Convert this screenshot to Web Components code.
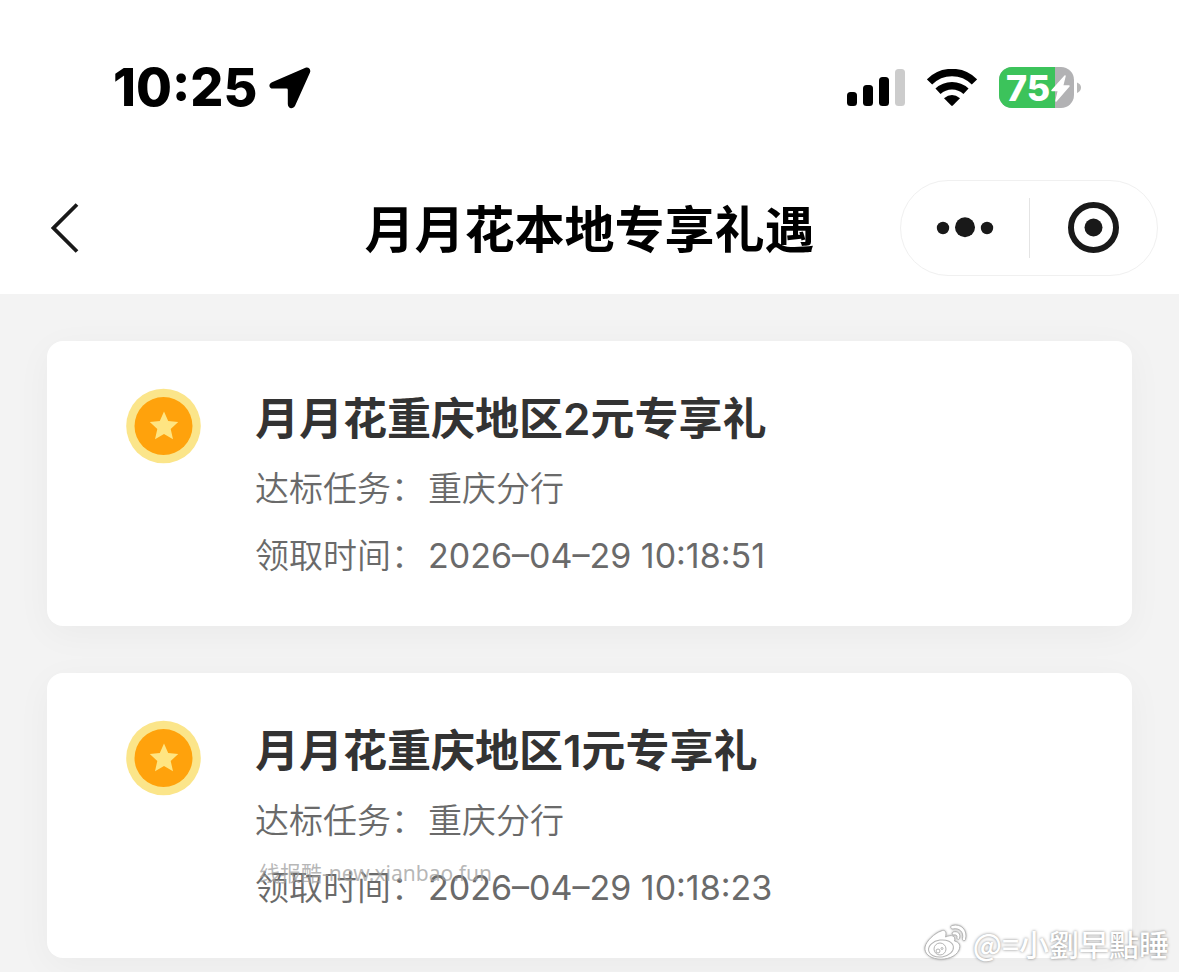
<!DOCTYPE html>
<html lang="zh-CN">
<head>
<meta charset="utf-8">
<meta name="viewport" content="width=device-width, initial-scale=1">
<title>月月花本地专享礼遇</title>
<style>
body { margin: 0; background: #f3f3f3; font-family: Inter, "Noto Sans CJK SC", sans-serif; color: #333; }
</style>
</head>
<body>
<gift-page></gift-page>
<script>
const define = (name, html) => customElements.define(name, class extends HTMLElement {
  connectedCallback() {
    if (this.shadowRoot) return;
    const t = document.createElement('template');
    t.innerHTML = html;
    this.attachShadow({ mode: 'open' }).append(t.content.cloneNode(true));
  }
});

define('status-bar', `
<style>
:host { display: flex; align-items: center; justify-content: space-between; height: 176px; padding: 0 97px 0 113px; color: #000; }
div { display: flex; align-items: center; }
.time { gap: 12px; font-size: 52px; font-weight: 800; line-height: 60px; }
.state { gap: 22px; }
.battery { position: relative; display: flex; align-items: center; width: 83px; height: 42px; }
.level { position: absolute; left: 7px; font-size: 36px; font-weight: 800; line-height: 42px; color: #fff; }
svg { display: block; }
</style>
<div class="time"><span>10:25</span>
<svg width="42" height="42" viewBox="0 0 42 42"><path d="M36.5.8 3 15.2C-.8 17-.4 21.600 4 21.600H17.500Q18.800 21.600 18.800 23V37C18.800 42 24.200 42.500 26.200 38.500L41 5.500C42.200 2.300 39.500-.4 36.500.8Z"/></svg></div>
<div class="state">
<svg width="58" height="38" viewBox="0 0 58 38"><rect y="23" width="10" height="14" rx="3.500"/><rect x="16" y="16" width="10" height="21" rx="3.500"/><rect x="32" y="8" width="10" height="29" rx="3.500"/><rect x="48" width="10" height="37" rx="3.500" fill="#ccc"/></svg>
<svg width="50" height="38" viewBox="0 0 50 38"><path d="M2.500 13A31.500 31.500 0 0 1 47.500 13" fill="none" stroke="#000" stroke-width="7.500"/><path d="M11 22.300A20.500 20.500 0 0 1 39 22.300" fill="none" stroke="#000" stroke-width="7.500"/><path d="M17 29.300Q25 22.500 33 29.300L25.800 36.600Q25 37.400 24.200 36.600Z"/></svg>
<div class="battery"><svg width="83" height="42" viewBox="0 0 83 42"><defs><clipPath id="c"><rect width="75" height="41" rx="13"/></clipPath></defs><g clip-path="url(#c)"><rect width="75" height="41" fill="#b2b2b4"/><rect width="56" height="41" fill="#3cc35b"/></g><path d="M78 15.500Q82 17 82 20.500T78 26Z" fill="#b8b8b8"/><path d="M66 9 53 23.500H59.500L57 34 70 19H63.500Z" fill="#fff" stroke="#fff" stroke-width="1.500" stroke-linejoin="round"/></svg><span class="level">75</span></div>
</div>`);

define('nav-bar', `
<style>
:host { display: grid; grid-template-columns: 1fr auto 1fr; align-items: center; height: 104px; padding: 0 21px; color: #000; }
h1 { margin: 0; padding-top: 4px; font-size: 50px; line-height: 72px; font-weight: 700; white-space: nowrap; }
button { border: 0; background: none; padding: 0; display: flex; align-items: center; justify-content: center; }
svg { display: block; }
.back { width: 40px; height: 60px; margin-left: 24px; }
.capsule { justify-self: end; display: flex; align-items: center; box-sizing: border-box; width: 258px; height: 96px; border: 1px solid #f0f0f0; border-radius: 48px; }
.capsule button { flex: 1; height: 60px; }
.capsule button + button { border-left: 1px solid #e4e4e4; }
</style>
<button class="back" aria-label="返回"><svg width="28" height="50" viewBox="0 0 28 50"><path d="M26 1.500 2.500 25 26 48.500" fill="none" stroke="#191919" stroke-width="3.800"/></svg></button>
<h1><slot></slot></h1>
<div class="capsule">
<button aria-label="更多"><svg width="58" height="22" viewBox="0 0 58 22" fill="#191919"><circle cx="7" cy="11" r="6.200"/><circle cx="29" cy="10.300" r="10"/><circle cx="51" cy="11" r="6.200"/></svg></button>
<button aria-label="关闭"><svg width="52" height="52" viewBox="0 0 52 52"><circle cx="26.500" cy="25.500" r="22.500" fill="none" stroke="#191919" stroke-width="6"/><circle cx="26.500" cy="25.500" r="9" fill="#191919"/></svg></button>
</div>`);

define('coin-icon', `
<style>:host { display: block; } svg { display: block; }</style>
<svg width="75" height="76" viewBox="0 0 75 76"><circle cx="37.500" cy="38" r="37.300" fill="#fbe58a"/><circle cx="37.500" cy="38" r="29" fill="#ffa20c"/><path d="M38 23.500 42.200 33 52.200 34 44.700 41 47 51.200 38 46 29 51.200 31.300 41 23.800 34 33.800 33Z" fill="#ffe582"/></svg>`);

define('gift-card', `
<style>
:host { display: flex; align-items: flex-start; gap: 54px; padding: 47px 79px 37px; background: #fff; border-radius: 16px; box-shadow: 0 8px 36px rgba(0,0,0,.04); }
h2 { margin: 0; padding: 1px 0 6px; font-size: 44px; line-height: 60px; font-weight: 600; color: #333; }
dl { margin: 0; font-size: 34px; line-height: 67px; color: #6a6a6a; font-weight: 350; }
dl div { display: flex; }
dt, dd { margin: 0; }
dt { width: 173px; }
::slotted(time) { font-weight: 400; }
</style>
<coin-icon></coin-icon>
<div><h2><slot></slot></h2>
<dl><div><dt>达标任务：</dt><dd><slot name="task"></slot></dd></div><div><dt>领取时间：</dt><dd><slot name="time"></slot></dd></div></dl></div>`);

define('site-mark', `
<style>:host { display: block; font: 21px/28px "Noto Sans", "Noto Sans CJK SC", sans-serif; color: rgba(160,160,160,.75); white-space: nowrap; }</style><slot></slot>`);

define('author-mark', `
<style>
:host { display: flex; align-items: center; gap: 5px; font-size: 30px; line-height: 40px; color: #fff; font-weight: 500; white-space: nowrap; text-shadow: 0 0 3px rgba(0,0,0,.5); font-family: "Noto Sans CJK TC", sans-serif; }
svg { display: block; filter: drop-shadow(0 0 1px rgba(0,0,0,.3)); }
</style>
<svg width="44" height="38" viewBox="0 0 44 38" fill="#fff" stroke="#b4b4b4" stroke-width="1"><path d="M17 7C21 5 23 8 21.500 13 28 10 32 12 30.500 17 35 18 37 21 35 26 32 33 22 36 14 35 5 34 0 29 1 23 2 17 11 9 17 7Z"/><ellipse cx="17" cy="24.500" rx="12.500" ry="8.500" transform="rotate(-8 17 24.500)"/><circle cx="16" cy="25" r="6"/><circle cx="14" cy="27" r="2"/><circle cx="18" cy="24.500" r="1"/><path d="M28 1.500C37-1 44 6 41.500 15.500 41 17.500 38 17 38.500 14.500 40 8 35 3.500 29 5 26.500 5.500 26 2 28 1.500ZM29 8C34 6.500 37 10 35.500 14.500 35 16 32.500 15.500 33 13.500 33.500 11.500 32 10.500 30 11 28 11.500 27.500 8.500 29 8Z"/></svg>
<span><slot></slot></span>`);

define('gift-page', `
<style>
:host { display: block; position: relative; }
header { background: #fff; padding-bottom: 14px; }
main { display: flex; flex-direction: column; gap: 47px; padding: 47px 47px 14px; background: #f3f3f3; }
site-mark { position: absolute; left: 259px; bottom: 85px; }
author-mark { position: absolute; right: 10px; bottom: 9px; }
</style>
<header><status-bar></status-bar><nav-bar>月月花本地专享礼遇</nav-bar></header>
<main>
<gift-card>月月花重庆地区2元专享礼<span slot="task">重庆分行</span><time slot="time" datetime="2026-04-29T10:18:51">2026–04–29 10:18:51</time></gift-card>
<gift-card>月月花重庆地区1元专享礼<span slot="task">重庆分行</span><time slot="time" datetime="2026-04-29T10:18:23">2026–04–29 10:18:23</time></gift-card>
</main>
<site-mark>线报酷-new.xianbao.fun</site-mark>
<author-mark>@=小劉早點睡</author-mark>`);
</script>
</body>
</html>
